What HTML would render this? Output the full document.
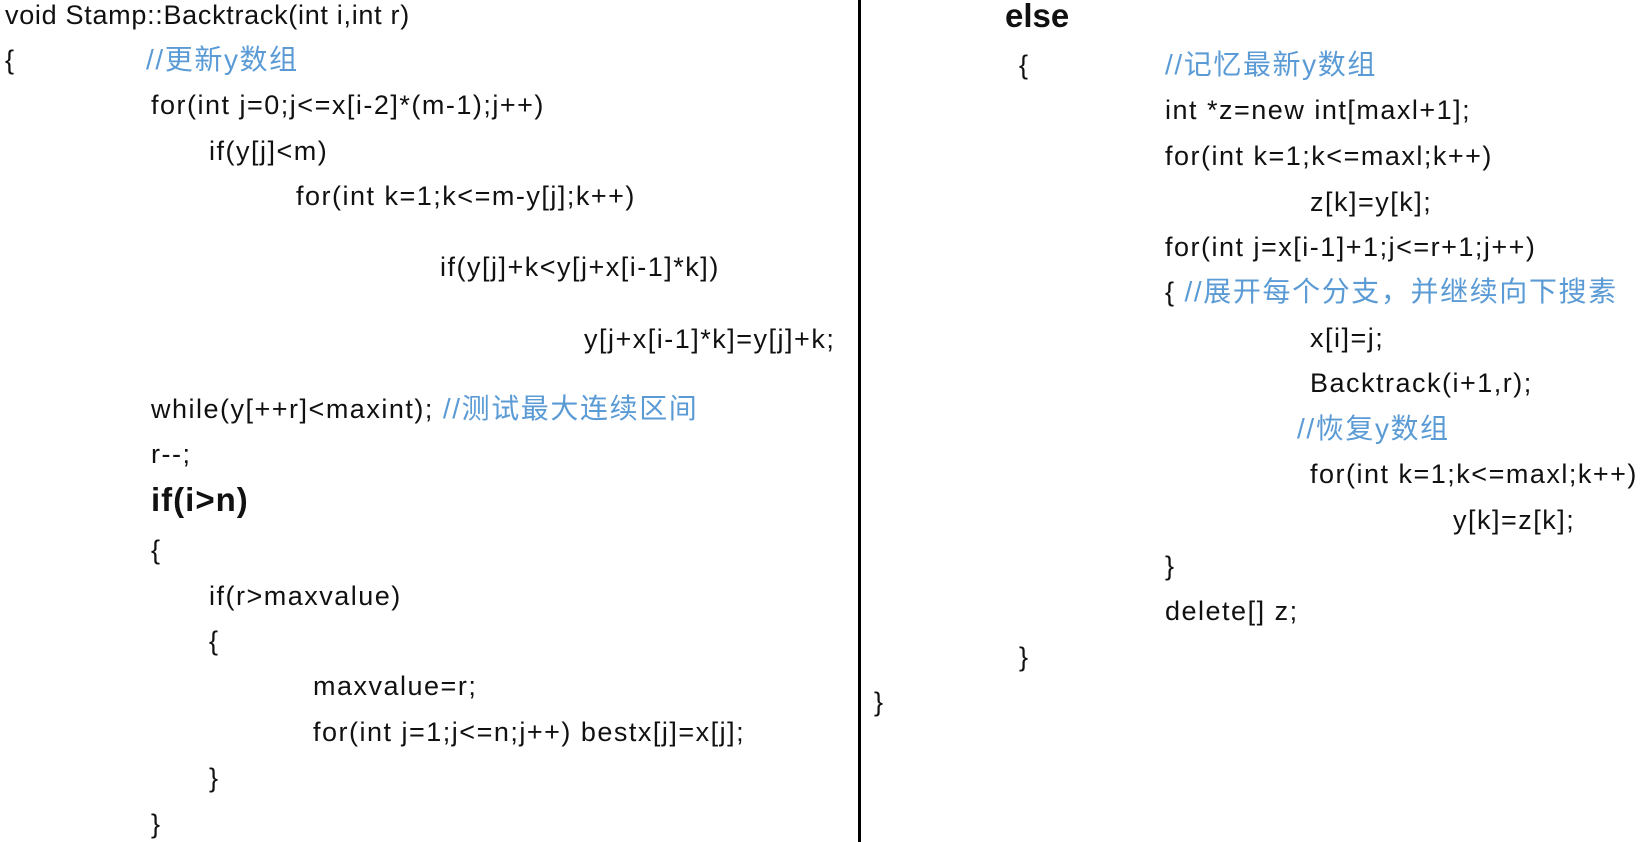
<!DOCTYPE html>
<html><head><meta charset="utf-8"><style>
html,body{margin:0;padding:0;background:#fff;}
body{width:1647px;height:842px;position:relative;overflow:hidden;font-family:"Liberation Sans","Noto Sans CJK SC",sans-serif;font-size:27px;letter-spacing:1.5px;color:#111;}
.l{position:absolute;white-space:pre;line-height:30px;}
.c{color:#5b9bd5;font-size:28px;letter-spacing:1.6px;}
.b{font-weight:bold;font-size:33px;letter-spacing:1px;}
#div{position:absolute;left:858px;top:0;width:3px;height:842px;background:#000;}
</style></head><body>
<div id="div"></div>
<div class="l" style="left:5px;top:0px;letter-spacing:0.7px">void Stamp::Backtrack(int i,int r)</div>
<div class="l" style="left:5px;top:45px">{</div>
<div class="l c" style="left:146px;top:45px">//更新y数组</div>
<div class="l" style="left:151px;top:90px">for(int j=0;j&lt;=x[i-2]*(m-1);j++)</div>
<div class="l" style="left:209px;top:136px">if(y[j]&lt;m)</div>
<div class="l" style="left:296px;top:181px">for(int k=1;k&lt;=m-y[j];k++)</div>
<div class="l" style="left:440px;top:252px">if(y[j]+k&lt;y[j+x[i-1]*k])</div>
<div class="l" style="left:584px;top:324px">y[j+x[i-1]*k]=y[j]+k;</div>
<div class="l" style="left:151px;top:394px">while(y[++r]&lt;maxint); <span class="c">//测试最大连续区间</span></div>
<div class="l" style="left:151px;top:439px">r--;</div>
<div class="l b" style="left:151px;top:485px">if(i&gt;n)</div>
<div class="l" style="left:151px;top:535px">{</div>
<div class="l" style="left:209px;top:581px">if(r&gt;maxvalue)</div>
<div class="l" style="left:209px;top:626px">{</div>
<div class="l" style="left:313px;top:671px">maxvalue=r;</div>
<div class="l" style="left:313px;top:717px">for(int j=1;j&lt;=n;j++) bestx[j]=x[j];</div>
<div class="l" style="left:209px;top:763px">}</div>
<div class="l" style="left:151px;top:809px">}</div>

<div class="l b" style="left:1005px;top:1px;letter-spacing:0">else</div>
<div class="l" style="left:1019px;top:50px">{</div>
<div class="l c" style="left:1165px;top:50px">//记忆最新y数组</div>
<div class="l" style="left:1165px;top:95px">int *z=new int[maxl+1];</div>
<div class="l" style="left:1165px;top:141px">for(int k=1;k&lt;=maxl;k++)</div>
<div class="l" style="left:1310px;top:187px">z[k]=y[k];</div>
<div class="l" style="left:1165px;top:232px">for(int j=x[i-1]+1;j&lt;=r+1;j++)</div>
<div class="l" style="left:1165px;top:277px">{ <span class="c">//展开每个分支，并继续向下搜素</span></div>
<div class="l" style="left:1310px;top:323px">x[i]=j;</div>
<div class="l" style="left:1310px;top:368px">Backtrack(i+1,r);</div>
<div class="l c" style="left:1297px;top:414px">//恢复y数组</div>
<div class="l" style="left:1310px;top:459px">for(int k=1;k&lt;=maxl;k++)</div>
<div class="l" style="left:1453px;top:505px">y[k]=z[k];</div>
<div class="l" style="left:1165px;top:551px">}</div>
<div class="l" style="left:1165px;top:596px">delete[] z;</div>
<div class="l" style="left:1019px;top:642px">}</div>
<div class="l" style="left:874px;top:687px">}</div>
</body></html>
